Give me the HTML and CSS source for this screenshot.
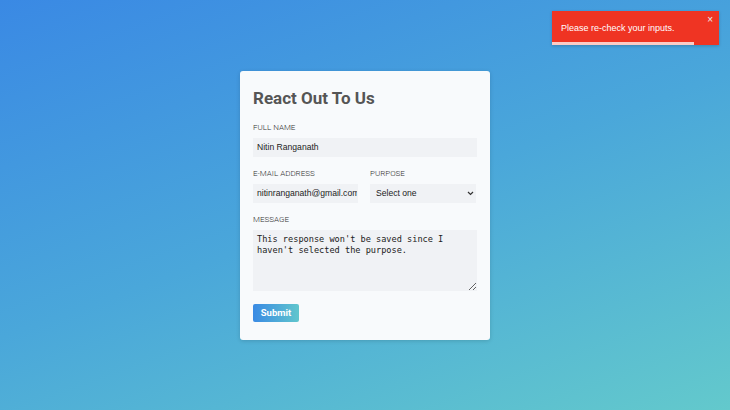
FILE: index.html
```html
<!DOCTYPE html>
<html>
<head>
<meta charset="utf-8">
<link rel="stylesheet" href="styles.css">
</head>
<body>
<div class="toast">
  <span class="toast-text">Please re-check your inputs.</span>
  <span class="toast-close">×</span>
  <div class="toast-bar"></div>
</div>
<main class="page">
  <form class="card">
    <h1 class="title">React Out To Us</h1>
    <div class="field">
      <label class="label">Full Name</label>
      <input class="input" type="text" value="Nitin Ranganath">
    </div>
    <div class="row">
      <div class="field">
        <label class="label">E-mail Address</label>
        <input class="input" type="text" value="nitinranganath@gmail.com">
      </div>
      <div class="field">
        <label class="label">Purpose</label>
        <div class="select-wrap">
          <select class="input select"><option>Select one</option></select>
          <svg class="chev" width="7" height="5" viewBox="0 0 7 5"><path d="M1 1 L3.5 3.5 L6 1" fill="none" stroke="#333" stroke-width="1.2"/></svg>
        </div>
      </div>
    </div>
    <div class="field">
      <label class="label">Message</label>
      <textarea class="input textarea">This response won't be saved since I haven't selected the purpose.</textarea>
    </div>
    <button class="submit" type="button">Submit</button>
  </form>
</main>
</body>
</html>
```
FILE: styles.css
```css
* { box-sizing: border-box; }
html, body { margin: 0; height: 100%; }
body {
  background: linear-gradient(160deg, #3a89e4 0%, #4aa7da 50%, #63c9cc 100%);
  font-family: Roboto, "Liberation Sans", sans-serif;
  overflow: hidden;
}
.page {
  height: 410px;
  display: flex;
  align-items: center;
  justify-content: center;
}
.card {
  width: 250px;
  height: 269px;
  background: #f8fafc;
  border-radius: 3px;
  box-shadow: 0 1px 4px rgba(0,0,0,0.15);
  padding: 15px 13px 0 13px;
  display: flex;
  flex-direction: column;
}
.title {
  margin: 0 0 12px 0;
  font-size: 17px;
  font-weight: 700;
  color: #555;
  line-height: 24px;
}
.field {
  display: flex;
  flex-direction: column;
  margin-bottom: 11px;
}
.label {
  font-size: 8px;
  text-transform: uppercase;
  color: #333;
  font-weight: 300;
  line-height: 11px;
  margin-bottom: 5px;
}
.row {
  display: grid;
  grid-template-columns: 105px 106px;
  column-gap: 12px;
}
.input {
  height: 19px;
  border: none;
  background: #f0f2f5;
  font-family: "Liberation Sans", Arial, sans-serif;
  font-size: 8.6px;
  color: #222;
  padding: 0 1px 0 4px;
  border-radius: 0;
  outline: none;
  width: 100%;
}
.select-wrap {
  position: relative;
}
.select {
  appearance: none;
  -webkit-appearance: none;
  padding: 0 6px;
  display: block;
}
.chev {
  position: absolute;
  right: 2px;
  top: 7px;
  pointer-events: none;
}
.textarea {
  height: 61px;
  font-family: "DejaVu Sans Mono", "Liberation Mono", monospace;
  font-size: 8.6px;
  line-height: 11px;
  padding: 4px 4px;
  color: #222;
  resize: vertical;
}
.submit {
  align-self: flex-start;
  margin-top: 2px;
  width: 46px;
  height: 18px;
  border: none;
  border-radius: 2px;
  background: linear-gradient(90deg, #3a8ae4, #60c6cd);
  color: #fff;
  font-family: Roboto, "Liberation Sans", sans-serif;
  font-weight: 700;
  font-size: 9.5px;
  padding: 0;
}
.toast {
  position: absolute;
  top: 11px;
  left: 552px;
  width: 167px;
  height: 34px;
  background: #ef3423;
  color: #fff;
  font-family: "Liberation Sans", Arial, sans-serif;
  font-size: 9px;
  box-shadow: 0 1px 3px rgba(0,0,0,0.2);
}
.toast-text {
  position: absolute;
  left: 9px;
  top: 12px;
}
.toast-close {
  position: absolute;
  right: 6px;
  top: 3px;
  font-size: 10px;
  color: #eee;
}
.toast-bar {
  position: absolute;
  left: 0;
  bottom: 0;
  width: 142px;
  height: 3px;
  background: rgba(255,255,255,0.75);
}
```
